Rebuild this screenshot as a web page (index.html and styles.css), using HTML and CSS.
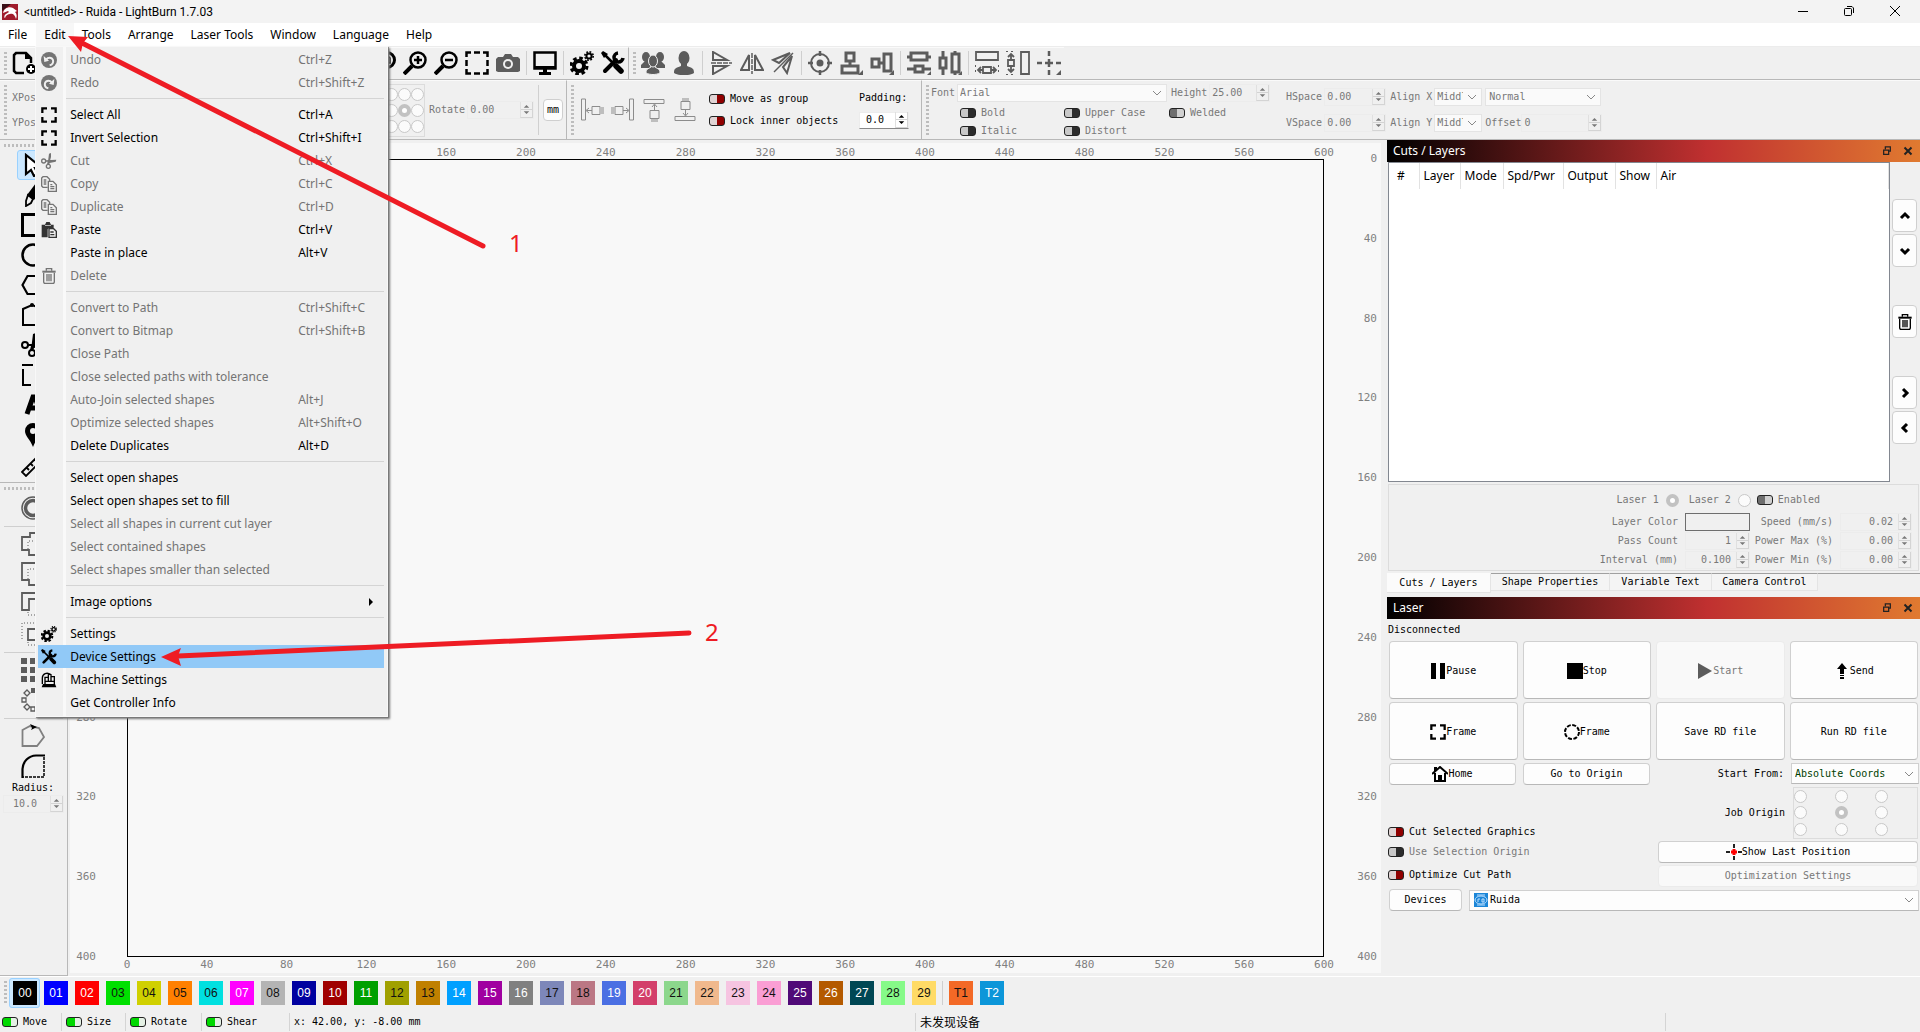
FILE: index.html
```html
<!DOCTYPE html>
<html lang="en">
<head>
<meta charset="utf-8">
<title>&lt;untitled&gt; - Ruida - LightBurn 1.7.03</title>
<link rel="stylesheet" href="styles.css">
</head>
<body>
<svg class="sprite" aria-hidden="true">
  <symbol id="arrows" viewBox="0 0 12 16"><path fill="currentColor" d="M6 3l3 3H3zM6 13l3-3H3z"/><path stroke="#d0d0d0" d="M0 8h12"/></symbol>
  <symbol id="gears" viewBox="0 0 24 24"><g fill="none" stroke="currentColor"><circle cx="9" cy="15" r="5" stroke-width="4"/><circle cx="9" cy="15" r="8" stroke-width="3" stroke-dasharray="3.600 2.680"/><circle cx="19" cy="5" r="2.600" stroke-width="2"/><circle cx="19" cy="5" r="4.200" stroke-width="1.600" stroke-dasharray="1.800 1.500"/></g></symbol>
  <symbol id="wrench" viewBox="0 0 24 24"><g fill="none" stroke="currentColor"><path stroke-width="4" stroke-linecap="round" d="M15 9L4 20"/><path stroke-width="3.500" d="M17 2a4.500 4.500 0 1 0 5 5"/><path stroke-width="2.500" d="M3 3l10 10"/><path stroke-width="5.500" stroke-linecap="round" d="M15 15l5 5"/></g><path fill="currentColor" d="M0 2l2-2 5 3-4 4z"/></symbol>
  <symbol id="marquee" viewBox="0 0 24 24"><path fill="none" stroke="currentColor" stroke-width="3.400" d="M2 9V2h7M15 2h7v7M22 15v7h-7M9 22H2v-7"/></symbol>
  <symbol id="dashed" viewBox="0 0 24 24"><path fill="none" stroke="currentColor" stroke-width="2.500" d="M1.500 6V1.500H6M9 1.500h6M18 1.500h4.500V6M22.500 9v6M22.500 18v4.500H18M15 22.500H9M6 22.500H1.500V18M1.500 15V9"/></symbol>
  <symbol id="scissors" viewBox="0 0 24 24"><g fill="none" stroke="currentColor" stroke-width="2"><circle cx="4" cy="12" r="3"/><circle cx="11" cy="20" r="3"/></g><path fill="currentColor" d="M7 11l16-1-1 3-9 2-1 3-3-1 1-4-3 0zM10 17L12 1l3-1v6l-3 11z"/></symbol>
  <symbol id="copy" viewBox="0 0 24 24"><g fill="none" stroke="currentColor" stroke-width="2"><path d="M10 17H3L1 15V3l2-2h6l4 4v3"/><path d="M11 8h7l5 5v10H11z"/><path d="M4 6h4M4 9h4M4 12h4M14 13h3M14 16h6M14 19h6"/></g></symbol>
  <symbol id="paste" viewBox="0 0 24 24"><path fill="currentColor" d="M1 4h5l2-4h5l2 4h4v5h-7l-2 2v12H1z"/><path fill="#efefef" d="M6 5h9v1H6z"/><path fill="none" stroke="currentColor" stroke-width="2" d="M12 10h7l4 4v9H12zM14 15h5M14 19h6"/></symbol>
  <symbol id="trash" viewBox="0 0 24 24"><path fill="none" stroke="currentColor" stroke-width="2" d="M4 7v14l1 2h14l1-2V7M8 4V1h8v3M9 9v11M12 9v11M15 9v11"/><path fill="currentColor" d="M2 4h20v3H2z"/></symbol>
  <symbol id="undo" viewBox="0 0 24 24"><circle cx="12" cy="12" r="12" fill="currentColor"/><path fill="none" stroke="#efefef" stroke-width="3" d="M8 11c2-3 8-4 10 1 1 4-1 7-5 8"/><path fill="#efefef" d="M4 6l8 7-7 2z"/></symbol>
  <symbol id="redo" viewBox="0 0 24 24"><circle cx="12" cy="12" r="12" fill="currentColor"/><path fill="none" stroke="#efefef" stroke-width="3" d="M16 11c-2-3-8-4-10 1-1 4 1 7 5 8"/><path fill="#efefef" d="M20 6l-8 7 7 2z"/></symbol>
  <symbol id="machine" viewBox="0 0 24 24"><path fill="none" stroke="currentColor" stroke-width="2" d="M2 18V9a7 7 0 0 1 12-5M6 18V8h6M11 14V4l2-1 2 1v10M15 7h5v11M7 14h12"/><path fill="currentColor" d="M3 18h18l2 5H1z"/></symbol>
  <symbol id="restore" viewBox="0 0 10 12"><path fill="none" stroke="#222" stroke-width="1.500" d="M3 4V1h6v5H7M1 5h6v5H1z"/></symbol>
  <symbol id="close" viewBox="0 0 10 10"><path fill="none" stroke="#222" stroke-width="2" d="M1.500 1.500l7 7M8.500 1.500l-7 7"/></symbol>
</svg>

<header class="titlebar">
  <svg class="logo" viewBox="0 0 16 16"><path fill="#a01c2c" d="M0 0h16v16H0z"/><path fill="#3a1018" d="M0 0h9L0 7z"/><path fill="#fff" d="M1 9c1-5 6-7 10-5l4 3-2 1c2 2 2 4 1 7-1-4-3-6-6-5-2 0-4 1-5 4-1 0-1-3 1-4l3-2-1-1z"/></svg>
  <h1 class="window-title">&lt;untitled&gt; - Ruida - LightBurn 1.7.03</h1>
  <div class="window-controls">
    <button aria-label="Minimize"><svg viewBox="0 0 10 10"><path stroke="#000" d="M0 5.500h10"/></svg></button>
    <button aria-label="Restore"><svg viewBox="0 0 10 10"><rect x=".5" y="2.500" width="7" height="7" rx="1" fill="none" stroke="#000"/><path fill="none" stroke="#000" d="M3 .5h5l1.500 1.500v5"/></svg></button>
    <button aria-label="Close"><svg viewBox="0 0 10 10"><path stroke="#000" d="M0 0l10 10M10 0L0 10"/></svg></button>
  </div>
</header>

<nav class="menubar">
  <button>File</button>
  <div class="menu-anchor">
    <button class="open">Edit</button>
    <div class="menu" role="menu">
      <button disabled><svg><use href="#undo"/></svg><span>Undo</span><kbd>Ctrl+Z</kbd></button>
      <button disabled><svg><use href="#redo"/></svg><span>Redo</span><kbd>Ctrl+Shift+Z</kbd></button>
      <hr>
      <button><svg><use href="#marquee"/></svg><span>Select All</span><kbd>Ctrl+A</kbd></button>
      <button><svg><use href="#marquee"/></svg><span>Invert Selection</span><kbd>Ctrl+Shift+I</kbd></button>
      <button disabled><svg><use href="#scissors"/></svg><span>Cut</span><kbd>Ctrl+X</kbd></button>
      <button disabled><svg><use href="#copy"/></svg><span>Copy</span><kbd>Ctrl+C</kbd></button>
      <button disabled><svg><use href="#copy"/></svg><span>Duplicate</span><kbd>Ctrl+D</kbd></button>
      <button><svg class="soft"><use href="#paste"/></svg><span>Paste</span><kbd>Ctrl+V</kbd></button>
      <button><i></i><span>Paste in place</span><kbd>Alt+V</kbd></button>
      <button disabled><svg><use href="#trash"/></svg><span>Delete</span></button>
      <hr>
      <button disabled><i></i><span>Convert to Path</span><kbd>Ctrl+Shift+C</kbd></button>
      <button disabled><i></i><span>Convert to Bitmap</span><kbd>Ctrl+Shift+B</kbd></button>
      <button disabled><i></i><span>Close Path</span></button>
      <button disabled><i></i><span>Close selected paths with tolerance</span></button>
      <button disabled><i></i><span>Auto-Join selected shapes</span><kbd>Alt+J</kbd></button>
      <button disabled><i></i><span>Optimize selected shapes</span><kbd>Alt+Shift+O</kbd></button>
      <button><i></i><span>Delete Duplicates</span><kbd>Alt+D</kbd></button>
      <hr>
      <button><i></i><span>Select open shapes</span></button>
      <button><i></i><span>Select open shapes set to fill</span></button>
      <button disabled><i></i><span>Select all shapes in current cut layer</span></button>
      <button disabled><i></i><span>Select contained shapes</span></button>
      <button disabled><i></i><span>Select shapes smaller than selected</span></button>
      <hr>
      <button><i></i><span>Image options</span><b class="submenu"></b></button>
      <hr>
      <button><svg><use href="#gears"/></svg><span>Settings</span></button>
      <button class="hover"><svg><use href="#wrench"/></svg><span>Device Settings</span></button>
      <button><svg><use href="#machine"/></svg><span>Machine Settings</span></button>
      <button><i></i><span>Get Controller Info</span></button>
    </div>
  </div>
  <button>Tools</button>
  <button>Arrange</button>
  <button>Laser Tools</button>
  <button>Window</button>
  <button>Language</button>
  <button>Help</button>
</nav>

<div class="toolbar icons">
  <section class="tool-group">
    <span class="grip"></span>
    <button aria-label="New"><svg viewBox="0 0 24 24"><path fill="none" stroke="#000" stroke-width="2.500" d="M12 22H4l-2-2V4l2-2h10l5 5v5"/><path d="M13 2l6 6h-6z"/><circle cx="19" cy="18" r="5"/><path stroke="#fff" stroke-width="2" d="M16 18h6M19 15v6"/></svg></button>
    <span class="under-menu"></span>
    <button aria-label="Zoom to page"><svg viewBox="0 0 24 24"><circle cx="15" cy="9" r="7.500" fill="none" stroke="#000" stroke-width="3"/><path stroke="#000" stroke-width="5" d="M9 15l-7 7"/><path fill="none" stroke="#000" stroke-width="1.500" d="M12 5h4l2 2v5h-6z"/></svg></button>
    <button aria-label="Zoom in"><svg viewBox="0 0 24 24"><circle cx="15" cy="9" r="7.500" fill="none" stroke="#000" stroke-width="2.500"/><path stroke="#000" stroke-width="4" d="M9 15l-8 8"/><path stroke="#000" stroke-width="2.500" d="M11 9h8M15 5v8"/></svg></button>
    <button aria-label="Zoom out"><svg viewBox="0 0 24 24"><circle cx="15" cy="9" r="7.500" fill="none" stroke="#000" stroke-width="2.500"/><path stroke="#000" stroke-width="4" d="M9 15l-8 8"/><path stroke="#000" stroke-width="2.500" d="M11 9h8"/></svg></button>
    <button aria-label="Frame selection"><svg><use href="#dashed"/></svg></button>
    <button aria-label="Camera" class="gray"><svg viewBox="0 0 24 24"><path fill="currentColor" d="M2 6h5l2-3h6l2 3h5l2 2v12l-2 1H2l-2-1V8z"/><circle cx="12" cy="13" r="5" fill="#efefef"/><circle cx="12" cy="13" r="3" fill="currentColor"/></svg></button>
    <span class="sep"></span>
    <button aria-label="Preview"><svg viewBox="0 0 24 24"><path fill="none" stroke="#000" stroke-width="2.500" d="M1.500 1.500h21v16h-21z"/><path d="M2 15h20v3H2zM10 18h4v3h4v3H6v-3h4z"/></svg></button>
    <span class="sep"></span>
    <button aria-label="Settings"><svg><use href="#gears"/></svg></button>
    <button aria-label="Device settings"><svg><use href="#wrench"/></svg></button>
  </section>
  <section class="tool-group gray">
    <span class="grip"></span>
    <button aria-label="Group"><svg viewBox="0 0 24 24"><g fill="currentColor"><ellipse cx="5" cy="6" rx="4" ry="5"/><ellipse cx="19" cy="6" rx="4" ry="5"/><path d="M0 14l4-4h4l2 7H0zM24 14l-4-4h-4l-2 7h10z"/></g><g fill="currentColor" stroke="#efefef"><path d="M5 22c0-4 2-4 5-6V14h4v2c3 2 5 2 5 6-4 2-10 2-14 0z"/><ellipse cx="12" cy="10" rx="4.500" ry="6"/></g></svg></button>
    <button aria-label="Ungroup"><svg viewBox="0 0 24 24"><path fill="currentColor" d="M2 22c0-5 2-5 7-7v-3h6v3c5 2 7 2 7 7-5 3-15 3-20 0z"/><ellipse cx="12" cy="7" rx="5.500" ry="7" fill="currentColor"/></svg></button>
    <span class="sep"></span>
    <button aria-label="Flip vertical"><svg viewBox="0 0 24 24"><path fill="none" stroke="currentColor" stroke-width="2" d="M4 1v8h14zM4 23v-8h14z"/><path stroke="currentColor" stroke-width="1.500" stroke-dasharray="5 1" d="M2 12h21"/></svg></button>
    <button aria-label="Flip horizontal"><svg viewBox="0 0 24 24"><path fill="none" stroke="currentColor" stroke-width="2" d="M1 19h8V4zM23 19h-8V4z"/><path stroke="currentColor" stroke-width="1.500" stroke-dasharray="5 1" d="M12 2v21"/></svg></button>
    <button aria-label="Mirror"><svg viewBox="0 0 24 24"><path fill="none" stroke="currentColor" stroke-width="2" d="M2 9L19 2 8 12zM21 5l-5 17-4-6z"/><path stroke="currentColor" stroke-width="1.500" d="M3 21L22 2"/></svg></button>
    <span class="sep"></span>
    <button aria-label="Center origin"><svg viewBox="0 0 24 24"><circle cx="12" cy="12" r="9" fill="none" stroke="currentColor" stroke-width="2"/><circle cx="12" cy="12" r="3.500" fill="currentColor"/><path stroke="currentColor" stroke-width="2.500" d="M12 0v5M12 19v5M0 12h5M19 12h5"/></svg></button>
    <button aria-label="Align vertical centers"><svg viewBox="0 0 24 24"><path fill="none" stroke="currentColor" stroke-width="3" d="M7 2h8v8H7zM3 15h16v7H3zM11 10v5"/><path fill="currentColor" d="M24 19v5h-5z"/></svg></button>
    <button aria-label="Align horizontal centers"><svg viewBox="0 0 24 24"><path fill="none" stroke="currentColor" stroke-width="3" d="M2 8h7v8H2zM14 3h7v17h-7zM9 12h5"/><path fill="currentColor" d="M24 19v5h-5z"/></svg></button>
    <span class="sep"></span>
    <button aria-label="Distribute vertically"><svg viewBox="0 0 24 24"><path fill="none" stroke="currentColor" stroke-width="3" d="M4 2h16v7H4zM8 15h8v6H8zM0 18h8M16 18h8M0 6h4M20 6h4"/><path fill="currentColor" d="M24 20v4h-4z"/></svg></button>
    <button aria-label="Distribute horizontally"><svg viewBox="0 0 24 24"><path fill="none" stroke="currentColor" stroke-width="3" d="M2 7h6v10H2zM14 3h7v18h-7zM5 0v7M5 17v7M17 0v3M17 21v3"/><path fill="currentColor" d="M24 20v4h-4z"/></svg></button>
    <span class="sep"></span>
    <button aria-label="Match width"><svg viewBox="0 0 24 24"><path fill="none" stroke="currentColor" stroke-width="1.800" d="M1 1h22v8H1zM8 16h8v6H8zM3 19h5M16 19h5M6 16l-3 3 3 3M18 16l3 3-3 3"/><path stroke="currentColor" stroke-dasharray="2 3" d="M.5 14v10M23.500 14v10"/></svg></button>
    <button aria-label="Match height"><svg viewBox="0 0 24 24"><path fill="none" stroke="currentColor" stroke-width="1.800" d="M15 1h8v22h-8zM2 9h6v6H2zM5 3v6M5 15v6M2 6l3-3 3 3M2 18l3 3 3-3"/><path stroke="currentColor" stroke-dasharray="2 3" d="M0 .5h10M0 23.500h10"/></svg></button>
    <button aria-label="Move to position"><svg viewBox="0 0 24 24"><path stroke="currentColor" stroke-width="2.500" d="M0 12h5M8 12h8M19 12h5M12 0v5M12 8v8M12 19v5"/><path fill="currentColor" d="M24 19v5h-5z"/></svg></button>
  </section>
</div>

<div class="toolbar fields">
  <section class="transform dim">
    <span class="grip"></span>
    <div class="pos"><span>XPos</span><span>YPos</span></div>
    <fieldset class="anchor" disabled>
      <input type="radio" name="anchor" aria-label="Top left"><input type="radio" name="anchor" aria-label="Top"><input type="radio" name="anchor" aria-label="Top right">
      <input type="radio" name="anchor" aria-label="Left"><input type="radio" name="anchor" aria-label="Center" checked><input type="radio" name="anchor" aria-label="Right">
      <input type="radio" name="anchor" aria-label="Bottom left"><input type="radio" name="anchor" aria-label="Bottom"><input type="radio" name="anchor" aria-label="Bottom right">
    </fieldset>
    <label for="rotate">Rotate</label>
    <span class="spin w-rotate"><input id="rotate" value="0.00" disabled><svg><use href="#arrows"/></svg></span>
    <span class="rule"></span>
    <button class="unit">mm</button>
  </section>
  <section class="docking">
    <span class="grip"></span>
    <div class="dock-icons">
      <svg viewBox="0 0 24 24"><path d="M1.500 1v21h4V1zM12 8.500h8v8h-8zM12 12.500H7M9 10l-3 2.500L9 15M22 9v7M24 9v7"/></svg>
      <svg viewBox="0 0 24 24"><path d="M22.500 1v21h-4V1zM4 8.500h8v8H4zM12 12.500h5M15 10l3 2.500L15 15M2 9v7M0 9v7"/></svg>
      <svg viewBox="0 0 24 24"><path d="M2 1.500h20v4H2zM8 12.500h9v8H8zM12.500 12V7M10 9l2.500-3L15 9M9 22h7M9 24h7"/></svg>
      <svg viewBox="0 0 24 24"><path d="M2 22.500h20v-4H2zM8 3.500h9v8H8zM12.500 12v5M10 15l2.500 3L15 15M9 2h7M9 0h7"/></svg>
    </div>
    <div class="toggles">
      <label><input type="checkbox" class="toggle red">Move as group</label>
      <label><input type="checkbox" class="toggle red">Lock inner objects</label>
    </div>
    <div class="padding-field">
      <label for="padding">Padding:</label>
      <span class="spin active"><input id="padding" value="0.0"><svg><use href="#arrows"/></svg></span>
    </div>
  </section>
  <section class="text-tools dim">
    <span class="grip"></span>
    <div class="font-block">
      <div class="font-row">
        <label for="font">Font</label>
        <select id="font" class="w-font" disabled><option>Arial</option></select>
        <label for="height">Height</label>
        <span class="spin w-height"><input id="height" value="25.00" disabled><svg><use href="#arrows"/></svg></span>
      </div>
      <div class="style-grid">
        <label><input type="checkbox" class="toggle" disabled>Bold</label>
        <label><input type="checkbox" class="toggle" disabled>Upper Case</label>
        <label><input type="checkbox" class="toggle" checked disabled>Welded</label>
        <label><input type="checkbox" class="toggle" disabled>Italic</label>
        <label><input type="checkbox" class="toggle" disabled>Distort</label>
      </div>
    </div>
    <div class="spacing-block">
      <div class="spacing-row">
        <label for="hspace">HSpace</label>
        <span class="spin w-space"><input id="hspace" value="0.00" disabled><svg><use href="#arrows"/></svg></span>
        <label for="alignx">Align X</label>
        <select id="alignx" class="w-align" disabled><option>Middle</option></select>
        <select class="w-normal" aria-label="Path mode" disabled><option>Normal</option></select>
      </div>
      <div class="spacing-row">
        <label for="vspace">VSpace</label>
        <span class="spin w-space"><input id="vspace" value="0.00" disabled><svg><use href="#arrows"/></svg></span>
        <label for="aligny">Align Y</label>
        <select id="aligny" class="w-align" disabled><option>Middle</option></select>
        <label for="offset">Offset</label>
        <span class="spin w-offset"><input id="offset" value="0" disabled><svg><use href="#arrows"/></svg></span>
      </div>
    </div>
  </section>
</div>

<main class="workspace">
  <aside class="tools">
    <span class="grip-h"></span>
    <button class="selected" aria-label="Select"><svg viewBox="0 0 24 24"><path fill="#fff" stroke="#000" stroke-width="2.200" d="M5 2v19l5-4 3 6 4-2-3-6h7z"/></svg></button>
    <button aria-label="Draw lines"><svg viewBox="0 0 24 24"><path d="M6 12L15 0l7 5-9 12z"/><path fill="none" stroke="#000" stroke-width="1.800" d="M7 12l5 4-2 4-5 3v-5z"/></svg></button>
    <button aria-label="Rectangle"><svg viewBox="0 0 24 24"><path fill="none" stroke="#000" stroke-width="3" d="M1.500 1.500h21v21h-21z"/></svg></button>
    <button aria-label="Ellipse"><svg viewBox="0 0 24 24"><circle cx="12" cy="12" r="10.500" fill="none" stroke="#000" stroke-width="2.500"/></svg></button>
    <button aria-label="Polygon"><svg viewBox="0 0 24 24"><path fill="none" stroke="#000" stroke-width="2.200" d="M1.500 12l5-9h11l5 9-5 9h-11z"/></svg></button>
    <button aria-label="Edit nodes"><svg viewBox="0 0 24 24"><path fill="none" stroke="#000" stroke-width="2" d="M2 22V6l9-4 11 4v16z"/><circle cx="11" cy="2" r="2"/></svg></button>
    <button aria-label="Trim"><svg><use href="#scissors"/></svg></button>
    <button aria-label="Tabs"><svg viewBox="0 0 24 24"><path fill="none" stroke="#000" stroke-width="2" d="M1 2h11M2 6v16h8M14 22h8V6"/></svg></button>
    <button aria-label="Text"><svg viewBox="0 0 24 24"><path fill="none" stroke="#000" stroke-width="5" d="M6 21l6-17h2l6 17M9 15h8"/></svg></button>
    <button aria-label="Position laser"><svg viewBox="0 0 24 24"><path fill-rule="evenodd" d="M12 24C9 16 4 13 4 8a8 8 0 0 1 16 0c0 5-5 8-8 16zM12 5a3 3 0 1 0 0 6 3 3 0 0 0 0-6z"/></svg></button>
    <button aria-label="Measure"><svg viewBox="0 0 24 24"><path fill="none" stroke="#000" stroke-width="1.800" d="M1 19L19 1l4 4L5 23zM6 15l2 2M10 11l2 2M14 7l2 2"/></svg></button>
    <hr class="dock-line">
    <span class="grip-h"></span>
    <button class="gray" aria-label="Offset shapes"><svg viewBox="0 0 24 24"><g fill="none" stroke="currentColor"><circle cx="12" cy="12" r="11" stroke-width="1.500"/><circle cx="12" cy="12" r="7.500" stroke-width="3.500"/></g></svg></button>
    <hr>
    <button class="gray" aria-label="Union"><svg viewBox="0 0 24 24"><path fill="none" stroke="currentColor" stroke-width="1.800" d="M1 5h8V1h14v18h-8v4H8v-5H1z"/><path fill="none" stroke="currentColor" stroke-dasharray="1 2" d="M7 17V9h9"/></svg></button>
    <button class="gray" aria-label="Subtract"><svg viewBox="0 0 24 24"><path fill="none" stroke="currentColor" stroke-width="1.800" d="M1 1h16v5h6v17H8v-5H1z"/><path fill="none" stroke="currentColor" stroke-dasharray="1 2" d="M7 17V7h9"/></svg></button>
    <button class="gray" aria-label="Difference"><svg viewBox="0 0 24 24"><path fill="none" stroke="currentColor" stroke-width="1.800" d="M1 1h16v6H8v11H1z"/><path fill="none" stroke="currentColor" stroke-dasharray="1 2" d="M7 17v6h16V7"/></svg></button>
    <button class="gray" aria-label="Intersection"><svg viewBox="0 0 24 24"><path fill="none" stroke="currentColor" stroke-dasharray="1 2" d="M1 17V1h16v6M7 17v6h16"/><path fill="none" stroke="currentColor" stroke-width="1.800" d="M7 7h10v11H7z"/></svg></button>
    <hr>
    <button class="gray" aria-label="Grid array"><svg viewBox="0 0 24 24"><path fill="currentColor" d="M0 0h6v6H0zM9 0h6v6H9zM18 0h6v6h-6zM0 9h6v6H0zM9 9h6v6H9zM18 9h6v6h-6zM0 18h6v6H0zM9 18h6v6H9zM18 18h6v6h-6z"/></svg></button>
    <button class="gray" aria-label="Circular array"><svg viewBox="0 0 24 24"><path fill="none" stroke="currentColor" stroke-width="1.300" d="M1 10h4v4H1zM3 5l3-3 3 3-3 3zM3 19l3-3 3 3-3 3zM10 19h4v4h-4z"/><path fill="currentColor" d="M10 0h5v5h-5z"/></svg></button>
    <hr>
    <button class="gray" aria-label="Start point"><svg viewBox="0 0 24 24"><path fill="none" stroke="#808080" stroke-width="1.800" d="M1.500 22V6L9 2l9 2 5 9-7 9z"/><path d="M9 0l7 3-6 3 1-2z"/></svg></button>
    <button aria-label="Radius"><svg viewBox="0 0 24 24"><path fill="none" stroke="#000" stroke-width="2.200" d="M1.500 24V15A14 14 0 0 1 15 1.500h9"/><path fill="none" stroke="#000" stroke-width="1.500" stroke-dasharray="3 1" d="M23 3v20H2"/></svg></button>
    <label for="radius">Radius:</label>
    <span class="spin w-radius dim"><input id="radius" value="10.0" disabled><svg><use href="#arrows"/></svg></span>
  </aside>

  <section class="canvas">
    <div class="ruler-x top"><span></span><span></span><span></span><span></span><span>160</span><span>200</span><span>240</span><span>280</span><span>320</span><span>360</span><span>400</span><span>440</span><span>480</span><span>520</span><span>560</span><span>600</span></div>
    <div class="ruler-y"><span></span><span></span><span></span><span></span><span></span><span></span><span></span><span>280</span><span>320</span><span>360</span><span>400</span></div>
    <div class="plot"></div>
    <div class="ruler-y right"><span>0</span><span>40</span><span>80</span><span>120</span><span>160</span><span>200</span><span>240</span><span>280</span><span>320</span><span>360</span><span>400</span></div>
    <div class="ruler-x bottom"><span>0</span><span>40</span><span>80</span><span>120</span><span>160</span><span>200</span><span>240</span><span>280</span><span>320</span><span>360</span><span>400</span><span>440</span><span>480</span><span>520</span><span>560</span><span>600</span></div>
  </section>

  <aside class="docks">
    <section class="dock">
      <header class="dock-title"><h2>Cuts / Layers</h2><svg><use href="#restore"/></svg><svg><use href="#close"/></svg></header>
      <div class="layers">
        <div class="layer-list">
          <table>
            <thead><tr><th class="c30">#</th><th class="c41">Layer</th><th class="c43">Mode</th><th class="c60">Spd/Pwr</th><th class="c52">Output</th><th class="c41">Show</th><th>Air</th></tr></thead>
          </table>
        </div>
        <div class="layer-buttons">
          <button aria-label="Move up"><svg viewBox="0 0 12 12"><path d="M2 8l4-4 4 4"/></svg></button>
          <button aria-label="Move down"><svg viewBox="0 0 12 12"><path d="M2 4l4 4 4-4"/></svg></button>
          <button class="apart" aria-label="Delete layer"><svg class="bin"><use href="#trash"/></svg></button>
          <button class="apart" aria-label="Send right"><svg viewBox="0 0 12 12"><path d="M4 2l4 4-4 4"/></svg></button>
          <button aria-label="Send left"><svg viewBox="0 0 12 12"><path d="M8 2L4 6l4 4"/></svg></button>
        </div>
      </div>
      <div class="layer-settings dim">
        <div class="laser-row">
          <label>Laser 1 <input type="radio" name="laser" checked disabled></label>
          <label>Laser 2 <input type="radio" name="laser" disabled></label>
          <label class="enabled"><input type="checkbox" class="toggle" checked disabled>Enabled</label>
        </div>
        <div class="settings-grid">
          <span>Layer Color</span><button class="color-box" aria-label="Layer color" disabled></button>
          <label for="speed">Speed (mm/s)</label><span class="spin num"><input id="speed" value="0.02" disabled><svg><use href="#arrows"/></svg></span>
          <label for="pass">Pass Count</label><span class="spin num"><input id="pass" value="1" disabled><svg><use href="#arrows"/></svg></span>
          <label for="pmax">Power Max (%)</label><span class="spin num"><input id="pmax" value="0.00" disabled><svg><use href="#arrows"/></svg></span>
          <label for="interval">Interval (mm)</label><span class="spin num"><input id="interval" value="0.100" disabled><svg><use href="#arrows"/></svg></span>
          <label for="pmin">Power Min (%)</label><span class="spin num"><input id="pmin" value="0.00" disabled><svg><use href="#arrows"/></svg></span>
        </div>
      </div>
      <div class="tabs" role="tablist">
        <button class="current">Cuts / Layers</button><button class="t120">Shape Properties</button><button class="t101">Variable Text</button><button class="t106">Camera Control</button>
      </div>
    </section>

    <section class="dock laser">
      <header class="dock-title"><h2>Laser</h2><svg><use href="#restore"/></svg><svg><use href="#close"/></svg></header>
      <p class="status">Disconnected</p>
      <div class="actions">
        <button><svg viewBox="0 0 16 16"><path d="M1 0h5v16H1zM10 0h5v16h-5z"/></svg>Pause</button>
        <button><svg viewBox="0 0 16 16"><path d="M0 0h16v16H0z"/></svg>Stop</button>
        <button disabled><svg viewBox="0 0 16 16"><path fill="#5c5c5c" d="M1 0l14 8-14 8z"/></svg>Start</button>
        <button><svg viewBox="0 0 16 16"><path d="M8 0l5 6H10v5H6V6H3zM6 12h4v1H6zM6 14h4v2H6z"/></svg>Send</button>
        <button><svg><use href="#marquee"/></svg>Frame</button>
        <button><svg viewBox="0 0 16 16"><circle cx="8" cy="8" r="7" fill="none" stroke="#000" stroke-width="2" stroke-dasharray="4 1.500"/></svg>Frame</button>
        <button>Save RD file</button>
        <button>Run RD file</button>
      </div>
      <div class="origin-grid">
        <button class="small"><svg viewBox="0 0 16 16"><path fill="none" stroke="#000" stroke-width="2" d="M0 8l8-7 8 7M3 7v8h10V7"/><path d="M6 9h4v6H6zM2 1h3v4H2z"/></svg>Home</button>
        <button class="small">Go to Origin</button>
        <label for="startfrom">Start From:</label>
        <select id="startfrom" class="green"><option>Absolute Coords</option></select>
      </div>
      <div class="job">
        <div class="job-left">
          <label><input type="checkbox" class="toggle red">Cut Selected Graphics</label>
          <label class="dim"><input type="checkbox" class="toggle" disabled>Use Selection Origin</label>
          <label class="last"><input type="checkbox" class="toggle red">Optimize Cut Path</label>
        </div>
        <div class="job-right">
          <div class="job-origin">
            <span>Job Origin</span>
            <fieldset disabled>
              <input type="radio" name="job" aria-label="Top left"><input type="radio" name="job" aria-label="Top"><input type="radio" name="job" aria-label="Top right">
              <input type="radio" name="job" aria-label="Left"><input type="radio" name="job" aria-label="Center" checked><input type="radio" name="job" aria-label="Right">
              <input type="radio" name="job" aria-label="Bottom left"><input type="radio" name="job" aria-label="Bottom"><input type="radio" name="job" aria-label="Bottom right">
            </fieldset>
          </div>
          <button class="small"><svg viewBox="0 0 16 16"><path stroke="#222" stroke-width="2" d="M0 8h4M12 8h4M8 0v4M8 12v4"/><path stroke="red" stroke-width="3" d="M5 8h6M8 5v6"/></svg>Show Last Position</button>
          <button class="small" disabled>Optimization Settings</button>
        </div>
      </div>
      <div class="devices">
        <button class="small">Devices</button>
        <div class="device-select">
          <svg viewBox="0 0 14 14"><path fill="#1b86d8" d="M0 0h14v14H0z"/><ellipse cx="7" cy="7" rx="6" ry="4" fill="none" stroke="#bfe0ff"/><path stroke="#bfe0ff" fill="none" d="M4 9V6h2M8 6h2v3H8zM3 2h8M3 12h8"/></svg>
          <select aria-label="Device"><option>Ruida</option></select>
        </div>
      </div>
    </section>
  </aside>
</main>

<div class="palette">
  <span class="grip"></span>
  <button class="lt active" style="--c:#000">00</button><button class="lt" style="--c:#0000ff">01</button><button class="lt" style="--c:#ff0000">02</button><button style="--c:#00e000">03</button><button style="--c:#d0d000">04</button><button style="--c:#ff8000">05</button><button style="--c:#00e0e0">06</button><button class="lt" style="--c:#ff00ff">07</button><button style="--c:#b4b4b4">08</button><button class="lt" style="--c:#0000a0">09</button><button class="lt" style="--c:#a00000">10</button><button class="lt" style="--c:#00a000">11</button><button style="--c:#a0a000">12</button><button style="--c:#c08000">13</button><button class="lt" style="--c:#00a0ff">14</button><button class="lt" style="--c:#a000a0">15</button><button class="lt" style="--c:#808080">16</button><button style="--c:#7d87b9">17</button><button style="--c:#bb7784">18</button><button class="lt" style="--c:#4a6fe3">19</button><button class="lt" style="--c:#d33f6a">20</button><button style="--c:#8cd78c">21</button><button style="--c:#f0b98d">22</button><button style="--c:#f6c4e1">23</button><button style="--c:#fa9ed4">24</button><button class="lt" style="--c:#500a78">25</button><button class="lt" style="--c:#b45a00">26</button><button class="lt" style="--c:#004754">27</button><button style="--c:#86fa88">28</button><button style="--c:#ffdb66">29</button>
  <span class="sep"></span>
  <button style="--c:#f36926">T1</button><button class="lt" style="--c:#0c96d9">T2</button>
</div>

<footer class="statusbar">
  <label class="s61"><input type="checkbox" class="toggle lime" checked>Move</label>
  <label class="s64"><input type="checkbox" class="toggle lime" checked>Size</label>
  <label class="s76"><input type="checkbox" class="toggle lime" checked>Rotate</label>
  <label class="s88"><input type="checkbox" class="toggle lime" checked>Shear</label>
  <span class="coords">x: 42.00, y: -8.00 mm</span>
  <span class="device-state" lang="zh">未发现设备</span>
  <span class="tail"></span>
</footer>

<svg class="annotations" aria-hidden="true">
  <path stroke="#ee1c24" stroke-width="5" stroke-linecap="round" d="M82 43L483 246M178 656L689 633"/>
  <path fill="#ee1c24" d="M68 36l20 1-5 6-2 9zM161 657l20-9-3 8 3 10z"/>
</svg>
<span class="note note-1">1</span>
<span class="note note-2">2</span>
</body>
</html>
```
FILE: styles.css
```css
* { box-sizing: border-box; }
body {
  margin: 0;
  min-height: 100vh;
  display: flex;
  flex-direction: column;
  position: relative;
  background: #f0f0f0;
  color: #000;
  font: 10px/12px "DejaVu Sans Mono", "Noto Sans CJK SC", monospace;
}
button, input, select { font: inherit; color: inherit; margin: 0; padding: 0; border: 0; background: none; border-radius: 0; }
h1, h2, p { margin: 0; font-weight: normal; }
fieldset { margin: 0; padding: 0; min-width: 0; border: 1px solid #dcdcdc; }
button { display: flex; align-items: center; justify-content: center; }
svg { flex: none; display: block; }
label { display: flex; align-items: center; white-space: nowrap; }
.sprite { position: absolute; width: 0; height: 0; }
.dim { color: #787878; }
.gray { color: #5c5c5c; }

/* Title bar and menu bar */
.titlebar { height: 23px; display: flex; align-items: center; background: #f3f3f3; padding-left: 2px; }
.logo { width: 16px; height: 16px; margin-right: 6px; }
.window-title { flex: 1; font: 12px/16px Roboto, "Noto Sans", sans-serif; }
.window-controls { display: flex; padding: 0 2px 1px 0; }
.window-controls button { width: 46px; height: 21px; }
.window-controls svg { width: 10px; height: 10px; }
.menubar, .menu { font: 12px/16px "Noto Sans", "Open Sans", sans-serif; }
.menubar { height: 23px; display: flex; background: #fff; }
.menubar > button, .menu-anchor > button { height: 23px; padding: 0 8px; }
.menubar > button { padding: 0 9px 0 8px; }
.menubar .open { background: #f7f7f7; }
.menu-anchor { position: relative; }
.menu {
  position: absolute; left: -1px; top: 23px; z-index: 5; width: 353px; padding: 1px 3px 2px 2px;
  background: linear-gradient(90deg, #f0f0f0 27px, #f9f9f9 27px 30px, #f0f0f0 30px);
  border: 1px solid #f8f8f8; box-shadow: 2px 2px 2px #777, 1px 1px 0 #999;
}
.menu button { width: 100%; height: 23px; justify-content: flex-start; white-space: nowrap; }
.menu button:disabled { color: #747474; }
.menu svg, .menu i { width: 16px; height: 16px; margin: 0 13px 0 3px; flex: none; }
.menu svg.soft { color: #333; }
.menu span { width: 228px; text-align: left; }
.menu kbd { font: inherit; }
.menu hr { height: 1px; margin: 4px 0 4px 28px; border: 0; background: #d4d4d4; }
.menu .hover { background: #91c9f7; }
.submenu { margin-left: 71px; border: 4px solid transparent; border-left-color: #000; border-right: 0; }

/* Toolbars */
.toolbar { display: flex; border-bottom: 1px solid #b8b8b8; }
.toolbar section { display: flex; align-items: center; border-top: 1px solid #fafafa; }
.toolbar section + section { border-left: 1px solid #b8b8b8; }
.grip { width: 3px; align-self: stretch; margin: 4px 0; background: repeating-linear-gradient(#bdbdbd 0 2px, transparent 2px 4px); }
.icons { height: 34px; border-top: 1px solid #ececec; }
.icons section { padding-bottom: 2px; }
.icons .grip { margin: 4px 1px 2px 4px; }
.icons button { width: 31px; height: 28px; }
.icons button svg { width: 24px; height: 24px; }
.sep { width: 1px; height: 24px; margin: 0 2px 0 3px; background: #cfcfcf; }
.under-menu { width: 329px; }
.fields { height: 60px; }
.transform { width: 566px; }
.transform .grip { margin-left: 4px; }
.pos { display: flex; flex-direction: column; gap: 13px; margin-left: 5px; width: 372px; }
.anchor { display: grid; grid-template-columns: repeat(3, 13px); gap: 3px 0; padding: 3px 0; width: 41px; margin: 0 4px 0 0; }
input[type=radio] { appearance: none; width: 13px; height: 13px; border: 1px solid #c8c8c8; border-radius: 50%; background: #fbfbfb; }
input[type=radio]:checked { border: 4px solid #c2c2c2; background: #fff; }
.spin { display: flex; align-items: center; height: 18px; border: 1px solid #ececec; color: #787878; }
.spin input { flex: 1; width: 0; min-width: 0; padding-left: 2px; }
.spin svg { width: 13px; height: 16px; border: 1px solid #d4d4d4; border-top: 0; border-left-color: #e0e0e0; }
.spin.active { background: #fff; color: #000; border-bottom-color: #888; }
.transform .w-rotate { width: 67px; margin-left: 2px; }
.rule { width: 1px; height: 50px; background: #d0d0d0; margin: 0 4px; }
.unit { width: 20px; height: 22px; background: #fdfdfd; border: 1px solid #cfcfcf; border-radius: 4px; color: #000; }
.docking { width: 355px; padding-left: 4px; }
.dock-icons { display: flex; gap: 7px; margin-left: 6px; }
.dock-icons svg { width: 24px; height: 24px; fill: none; stroke: #8c8c8c; }
.toggles { display: flex; flex-direction: column; gap: 10px; width: 133px; margin-left: 12px; }
.padding-field { display: flex; flex-direction: column; gap: 8px; margin-left: 17px; }
.padding-field .spin { width: 50px; height: 17px; }
.padding-field .spin input { padding-left: 6px; }
.toggle {
  appearance: none; width: 16px; height: 10px; margin: 0 5px 0 0; flex: none; border: 1px solid #222; border-radius: 3px;
  background: linear-gradient(90deg, #c8c8c8 7px, #2c2c2c 7px);
}
.toggle:checked { background: linear-gradient(90deg, #6e6e6e 7px, #d0d0d0 7px); }
.toggle.red { background: linear-gradient(90deg, #e0d4d4 7px, #900000 7px); }
.toggle.lime { background: linear-gradient(90deg, #00d800 8px, #e4f0e4 8px); }
.text-tools { flex: 1; padding-left: 4px; }
.font-block { margin-left: 2px; width: 355px; align-self: stretch; display: flex; flex-direction: column; gap: 5px; padding-top: 3px; }
.font-row { display: flex; align-items: center; }
select { appearance: none; height: 18px; padding: 0 4px; border: 1px solid #e4e4e4; background: #fafafa url("data:image/svg+xml,%3Csvg xmlns='http://www.w3.org/2000/svg' width='10' height='6'%3E%3Cpath d='M1 1l4 4 4-4' fill='none' stroke='%23888'/%3E%3C/svg%3E") no-repeat right 4px center; }
select:disabled { opacity: 1; color: #787878; }
.font-row .w-font { width: 210px; margin: 0 4px 0 2px; padding-left: 2px; }
.w-height { width: 61px; margin-left: 2px; }
.style-grid { display: grid; grid-template-columns: 104px 105px auto; row-gap: 6px; padding-left: 29px; }
.spacing-block { display: flex; flex-direction: column; gap: 8px; padding-bottom: 1px; }
.spacing-row { display: flex; align-items: center; }
.w-space { width: 62px; margin: 0 4px 0 2px; }
.w-align { width: 48px; margin: 0 3px 0 2px; padding: 0 18px 0 2px; text-overflow: clip; }
.w-normal { width: 116px; padding-left: 3px; }
.w-offset { width: 81px; margin-left: 0; }

/* Workspace */
.workspace { flex: 1; display: flex; }
.tools { width: 68px; display: flex; flex-direction: column; align-items: stretch; border-right: 1px solid #b8b8b8; border-bottom: 1px solid #b8b8b8; }
.grip-h { height: 3px; margin: 4px 4px 3px; background: repeating-linear-gradient(90deg, #bdbdbd 0 2px, transparent 2px 4px); }
.tools button { height: 30px; margin: 0 19px 0 17px; }
.tools button svg { width: 24px; height: 24px; }
.tools .selected { background: #cce8ff; border: 1px solid #99d1ff; border-radius: 3px; }
.tools hr { height: 1px; margin: 3px 4px 2px; border: 0; background: #cfcfcf; }
.tools hr.dock-line { margin: 2px 0 0; background: #b8b8b8; }
.tools label { padding-left: 12px; height: 14px; }
.w-radius { margin: 0 3px; }
.w-radius input { padding-left: 9px; }

.canvas {
  flex: 1; min-width: 0; margin: 3px 6px 3px 2px; background: #f8f8f8; color: #808080; font-size: 11px; line-height: 14px;
  display: grid; grid-template-columns: 57px 1fr 57px; grid-template-rows: 16px 1fr 16px;
}
.plot { border: 1px solid #000; }
.ruler-x { grid-column: 2; display: flex; justify-content: space-between; margin: 1px -15px; }
.ruler-x.top { margin-top: 3px; margin-bottom: -1px; }
.ruler-x span { width: 30px; text-align: center; }
.ruler-y { grid-column: 1; display: flex; flex-direction: column; justify-content: space-between; margin: -7px 31px -7px 0; text-align: right; }
.ruler-y.right { grid-column: 3; margin: -7px 4px -7px 0; }
.ruler-y span { height: 14px; }

.docks { width: 533px; display: flex; flex-direction: column; gap: 4px; }
.dock-title { height: 22px; display: flex; align-items: center; gap: 11px; padding: 0 7px 0 6px; background: linear-gradient(90deg, #000, #c03030 60%, #e07a30); color: #fff; }
.dock-title h2 { flex: 1; font: 12px/16px "Noto Sans", "Open Sans", sans-serif; }
.dock-title svg { width: 10px; height: 10px; }
.layers { display: flex; gap: 2px; margin-left: 1px; }
.layer-list { width: 502px; height: 320px; background: #fff; border: 1px solid #828790; }
.layer-list table { width: 100%; table-layout: fixed; border-collapse: collapse; font: 12px/16px "Noto Sans", "Open Sans", sans-serif; }
.layer-list th { height: 26px; padding: 0 0 0 4px; font-weight: normal; text-align: left; border-right: 1px solid #e2e2e2; white-space: nowrap; }
.layer-list .c30 { width: 30px; padding-left: 8px; }
.layer-list .c41 { width: 41px; }
.layer-list .c43 { width: 43px; }
.layer-list .c60 { width: 60px; }
.layer-list .c52 { width: 52px; }
.layer-buttons { display: flex; flex-direction: column; gap: 2px; padding-top: 37px; }
.layer-buttons button { width: 25px; height: 33px; background: #fdfdfd; border: 1px solid #cfcfcf; border-radius: 4px; }
.layer-buttons .apart { margin-top: 36px; }
.layer-buttons svg { width: 12px; height: 12px; fill: none; stroke: #000; stroke-width: 3; }
.layer-buttons .bin { width: 16px; height: 16px; fill: currentColor; stroke: none; }
.layer-settings { height: 87px; margin: 2px 1px 0; border: 1px solid #dcdcdc; padding-top: 7px; }
.laser-row { display: flex; justify-content: flex-end; gap: 10px; padding-right: 98px; height: 16px; }
.laser-row input[type=radio] { margin-left: 7px; }
.laser-row .enabled { margin-left: -4px; }
.settings-grid { display: grid; grid-template-columns: 1fr 65px 76px 72px; gap: 1px 7px; padding: 5px 6px 0 0; align-items: center; justify-items: end; }
.settings-grid label { white-space: nowrap; }
.settings-grid .spin, .color-box { width: 100%; }
.color-box { height: 18px; border: 1px solid #6e6e6e; }
.num input { text-align: right; padding-right: 5px; }
.tabs { display: flex; align-items: flex-start; margin-top: 2px; background: linear-gradient(#a0a0a0, #a0a0a0) 0 0 / 100% 1px no-repeat; }
.tabs button { height: 18px; background: #f4f4f4; border: 1px solid #e4e4e4; border-top-color: #a0a0a0; border-left: 0; }
.tabs .current { width: 104px; height: 20px; background: #fbfbfb; border-top-color: #fbfbfb; }
.tabs .t120 { width: 119px; }
.tabs .t101 { width: 102px; }
.tabs .t106 { width: 106px; }

.status { height: 22px; padding: 5px 0 0 1px; }
.actions { display: grid; grid-template-columns: repeat(4, 1fr); gap: 3px 5px; padding: 0 2px; }
.actions button, .small { background: #fdfdfd; border: 1px solid #d0d0d0; border-bottom-color: #b8b8b8; border-radius: 4px; }
.actions button { height: 58px; padding-top: 1px; }
.actions button:disabled, .small:disabled { background: #f9f9f9; border-color: #ebebeb; color: #787878; }
.actions svg, .small svg { width: 16px; height: 16px; }
.small { height: 22px; }
.origin-grid { display: grid; grid-template-columns: 127px 127px 1fr 128px; gap: 7px; padding: 3px 1px 0 2px; }
.origin-grid label { justify-content: flex-end; }
.docks select { height: 21px; background-color: #fdfdfd; border-color: #d0d0d0; border-bottom-color: #b8b8b8; }
.docks select.green { padding-left: 3px; }
.green { color: #004000; }
.job { display: flex; justify-content: space-between; padding: 2px 2px 0 1px; }
.job-left { display: flex; flex-direction: column; gap: 8px; padding-top: 39px; }
.job-left .last { margin-top: 3px; }
.job-right { width: 260px; display: flex; flex-direction: column; gap: 2px; }
.job-origin { display: flex; justify-content: flex-end; align-items: center; gap: 8px; }
.job-origin fieldset { width: 125px; height: 52px; display: grid; grid-template-columns: 41px 40px 13px; row-gap: 3px; padding: 2px 0; }
.devices { display: flex; gap: 7px; padding: 2px 1px 0 2px; }
.devices .small { width: 73px; }
.device-select { flex: 1; display: grid; align-items: center; }
.device-select > * { grid-area: 1 / 1; }
.device-select svg { width: 14px; height: 14px; margin-left: 5px; z-index: 1; }
.device-select select { width: 100%; padding-left: 20px; }

/* Layer palette and status bar */
.palette { display: flex; align-items: center; height: 32px; padding-left: 4px; border-top: 1px solid #fff; }
.palette .grip { margin: 4px 2px 4px 0; }
.palette button { width: 31px; height: 30px; border: 3px solid transparent; border-left-width: 4px; border-right-width: 3px; background: var(--c) padding-box; font: 12px/14px "Liberation Sans", Arial, sans-serif; color: #111; }
.palette button.lt { color: #fff; }
.palette .active { border-color: #cce8ff; border-radius: 3px; outline: 1px solid #99d1ff; outline-offset: -1px; }
.statusbar { height: 24px; display: flex; align-items: center; padding: 3px 0 0 2px; }
.statusbar > * + * { border-left: 1px solid #d4d4d4; padding-left: 4px; height: 18px; }
.statusbar .s61 { width: 59px; }
.statusbar .s64 { width: 64px; }
.statusbar .s76 { width: 76px; }
.statusbar .s88 { width: 88px; }
.coords { flex: 626; line-height: 18px; }
.device-state { flex: 751; font: 12px/18px "Noto Sans CJK SC", sans-serif; }
.tail { flex: 252; }

/* Callouts drawn over the window */
.annotations { position: absolute; inset: 0; width: 100%; height: 100%; z-index: 9; pointer-events: none; }
.note { position: absolute; z-index: 9; color: #ee1c24; font: 24px/28px "Noto Sans", sans-serif; }
.note-1 { left: 509px; top: 229px; }
.note-2 { left: 705px; top: 618px; }
```
